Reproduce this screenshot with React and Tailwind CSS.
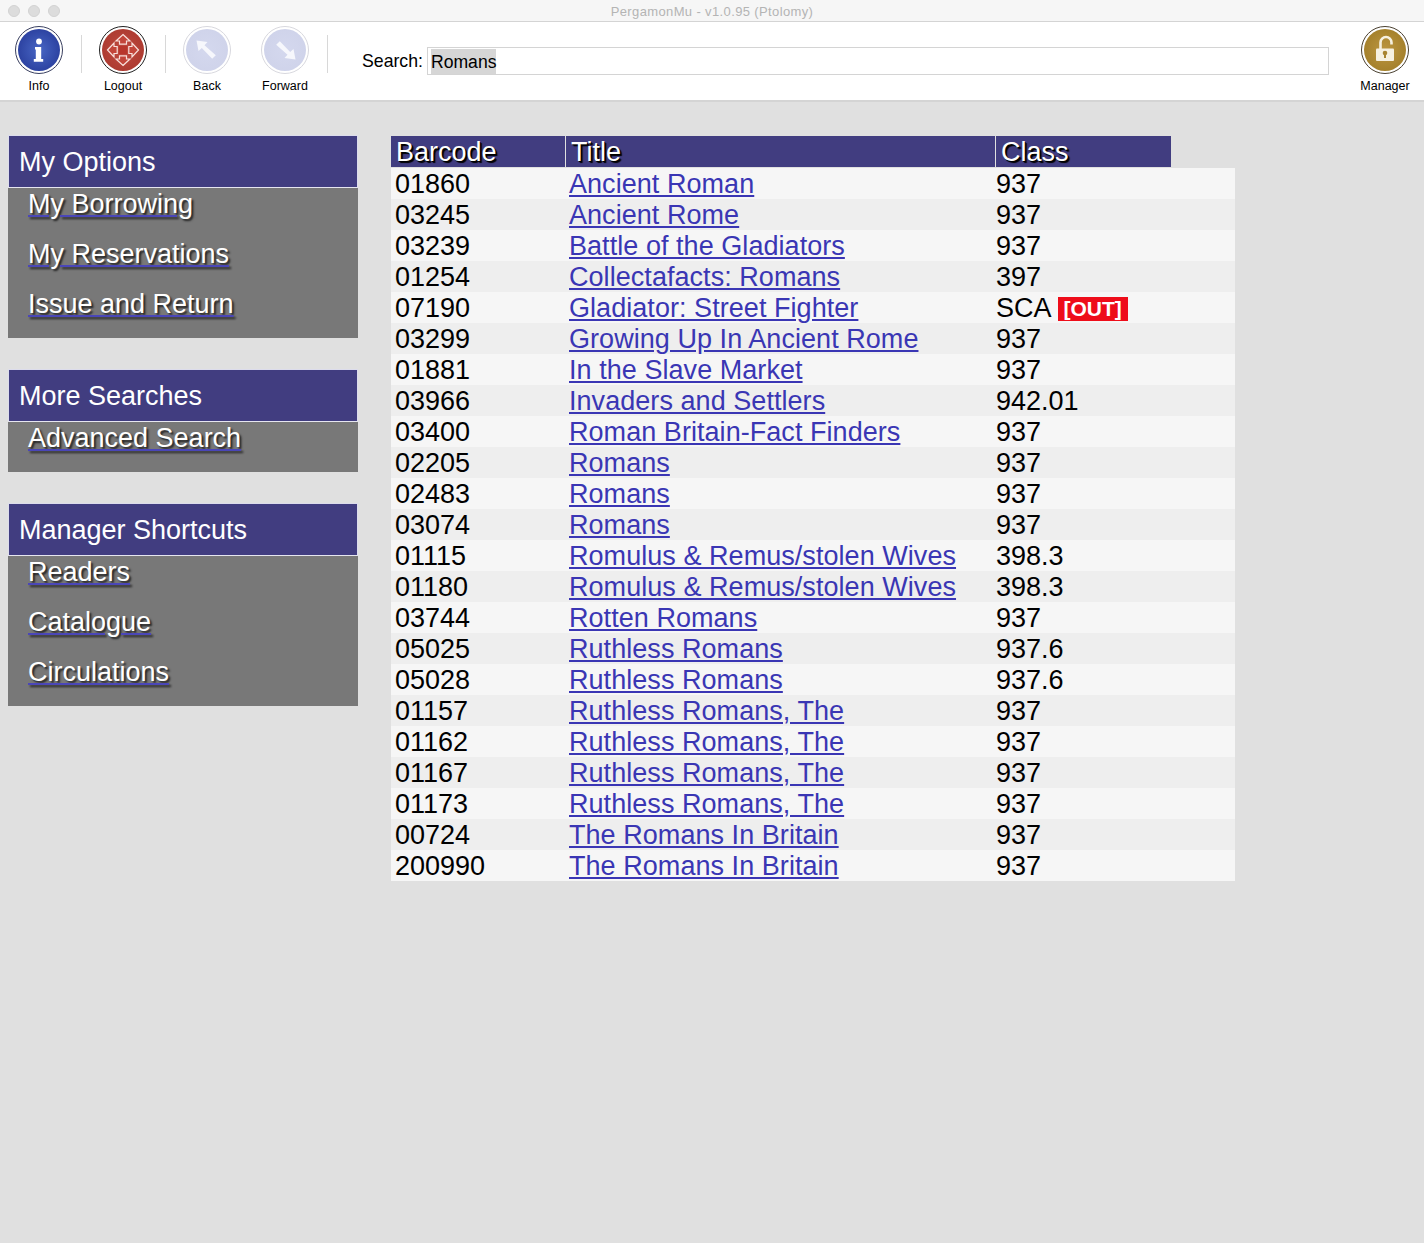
const rows = [
  ["01860", "Ancient Roman", "937"],
  ["03245", "Ancient Rome", "937"],
  ["03239", "Battle of the Gladiators", "937"],
  ["01254", "Collectafacts: Romans", "397"],
  ["07190", "Gladiator: Street Fighter", "SCA", true],
  ["03299", "Growing Up In Ancient Rome", "937"],
  ["01881", "In the Slave Market", "937"],
  ["03966", "Invaders and Settlers", "942.01"],
  ["03400", "Roman Britain-Fact Finders", "937"],
  ["02205", "Romans", "937"],
  ["02483", "Romans", "937"],
  ["03074", "Romans", "937"],
  ["01115", "Romulus & Remus/stolen Wives", "398.3"],
  ["01180", "Romulus & Remus/stolen Wives", "398.3"],
  ["03744", "Rotten Romans", "937"],
  ["05025", "Ruthless Romans", "937.6"],
  ["05028", "Ruthless Romans", "937.6"],
  ["01157", "Ruthless Romans, The", "937"],
  ["01162", "Ruthless Romans, The", "937"],
  ["01167", "Ruthless Romans, The", "937"],
  ["01173", "Ruthless Romans, The", "937"],
  ["00724", "The Romans In Britain", "937"],
  ["200990", "The Romans In Britain", "937"],
];

const menus = [
  { title: "My Options", items: ["My Borrowing", "My Reservations", "Issue and Return"] },
  { title: "More Searches", items: ["Advanced Search"] },
  { title: "Manager Shortcuts", items: ["Readers", "Catalogue", "Circulations"] },
];

function Disc({ ring = "#222", id, from, to, children }) {
  return (
    <svg width="48" height="48" viewBox="0 0 48 48">
      <defs>
        <radialGradient id={id} cx="50%" cy="50%" r="55%">
          <stop offset="0%" stopColor={from} />
          <stop offset="100%" stopColor={to} />
        </radialGradient>
      </defs>
      <circle cx="24" cy="24" r="23.5" fill="#fff" stroke={ring} strokeWidth="1" />
      <circle cx="24" cy="24" r="21" fill={`url(#${id})`} />
      {children}
    </svg>
  );
}

const InfoIcon = () => (
  <Disc id="i1" ring="#3a4060" from="#4866c4" to="#2a3f9e">
    <circle cx="24" cy="15.5" r="2.9" fill="#fff" />
    <path d="M20 21h6.2v12h2v2.8h-9.4v-2.8h2v-9.4h-0.8z" fill="#fff" />
  </Disc>
);
const LogoutIcon = () => (
  <Disc id="i2" ring="#222" from="#c04a40" to="#ac3a30">
    <rect x="20" y="20" width="8" height="8" fill="#b8362c" />
    <g fill="#c2453a" stroke="#f8e0dc" strokeWidth="1.2" strokeLinejoin="miter">
      <path d="M24 8.5l7 6.5h-3.5v3.2h-7v-3.2h-3.5z" />
      <path d="M24 39.5l7-6.5h-3.5v-3.2h-7v3.2h-3.5z" />
      <path d="M8.5 24l6.5-7v3.5h3.2v7h-3.2v3.5z" />
      <path d="M39.5 24l-6.5-7v3.5h-3.2v7h3.2v3.5z" />
    </g>
  </Disc>
);
const BackIcon = () => (
  <Disc id="i3" ring="#d8d8de" from="#d4d8ee" to="#cfd3ea">
    <path d="M13.5 14.5l11 1.5-3 3.2 11.3 10-3.6 3.6-10.4-10.8-3.3 3z" fill="#f6f7fc" />
  </Disc>
);
const ForwardIcon = () => (
  <Disc id="i4" ring="#d8d8de" from="#d4d8ee" to="#cfd3ea">
    <path d="M34.5 33.5l-11-1.5 3-3.2-11.3-10 3.6-3.6 10.4 10.8 3.3-3z" fill="#f6f7fc" />
  </Disc>
);
const ManagerIcon = () => (
  <Disc id="i5" ring="#4a4030" from="#bc9640" to="#a37f2a">
    <path d="M19.5 23v-6.5a5.5 5.5 0 0 1 11 0v2" fill="none" stroke="#f6f0e0" strokeWidth="2.6" />
    <rect x="15" y="22.5" width="18" height="12.5" rx="1" fill="#f6f0e0" />
    <circle cx="24" cy="27" r="2.3" fill="#a88430" />
    <rect x="23" y="27.5" width="2" height="4.5" fill="#a88430" />
  </Disc>
);

function Tool({ label, icon, className }) {
  return (
    <div className={`flex flex-col items-center w-[48px] ${className}`}>
      {icon}
      <span className="mt-[5px] text-[12.5px] leading-[15px] text-black whitespace-nowrap">{label}</span>
    </div>
  );
}

const Sep = ({ className }) => <div className={`w-px h-[38px] bg-[#d8d8d8] mt-[9px] ${className}`} />;

export default function App() {
  return (
    <div className="min-h-[1243px] bg-[#e0e0e0] font-['Liberation_Sans',Arial,sans-serif]">
      <div className="h-[22px] bg-[#f6f6f6] border-b border-[#d4d4d4] flex items-center relative">
        <div className="flex gap-[8px] pl-[8px]">
          <span className="w-[12px] h-[12px] rounded-full bg-[#dcdcdc] border border-[#d2d2d2]" />
          <span className="w-[12px] h-[12px] rounded-full bg-[#dcdcdc] border border-[#d2d2d2]" />
          <span className="w-[12px] h-[12px] rounded-full bg-[#dcdcdc] border border-[#d2d2d2]" />
        </div>
        <span className="absolute inset-x-0 top-[3px] text-center text-[13px] leading-[17px] text-[#b4b4b4] tracking-[0.37px]">
          PergamonMu - v1.0.95 (Ptolomy)
        </span>
      </div>

      <div className="h-[80px] bg-white border-b-2 border-[#d4d4d4] flex items-start pt-[4px] pl-[15px] pr-[15px]">
        <Tool label="Info" icon={<InfoIcon />} />
        <Sep className="ml-[18px]" />
        <Tool label="Logout" icon={<LogoutIcon />} className="ml-[17px]" />
        <Sep className="ml-[18px]" />
        <Tool label="Back" icon={<BackIcon />} className="ml-[17px]" />
        <Tool label="Forward" icon={<ForwardIcon />} className="ml-[30px]" />
        <Sep className="ml-[18px]" />
        <div className="flex items-center ml-[34px] mt-[20px] flex-1">
          <span className="text-[17.7px] leading-[30px] text-black">Search:</span>
          <div className="ml-[4px] flex-1 h-[28px] border border-[#d4d4d4] bg-white flex items-center pl-[3px]">
            <span className="text-[17.6px] leading-[24px] bg-[#d6d6d6] text-black pt-[1px]">Romans</span>
          </div>
        </div>
        <Tool label="Manager" icon={<ManagerIcon />} className="ml-[32px]" />
      </div>

      <div className="flex items-start pt-[33px] pl-[8px] text-[27px] leading-[31px]">
        <div className="w-[350px] flex flex-col gap-[31px]">
          {menus.map((m) => (
            <div key={m.title} className="bg-[#787878]">
              <div className="h-[53px] bg-[#413d80] border-t border-x border-[#dcdcec] border-b-[1px] border-b-[#e6e6f0] pl-[10px] pt-[11px] text-white">
                {m.title}
              </div>
              <div className="flex flex-col gap-[19px] pl-[20px] pb-[18px] pt-[1px]">
                {m.items.map((it) => (
                  <a
                    key={it}
                    className="text-white underline decoration-[#4a46b8] [text-shadow:2px_2px_2px_#222] w-fit"
                  >
                    {it}
                  </a>
                ))}
              </div>
            </div>
          ))}
        </div>

        <div className="ml-[33px] w-[844px] mt-[1px]">
          <div className="flex h-[32px] gap-px text-white [text-shadow:1px_1px_0_#000,2px_2px_1px_#000] pb-[1px]">
            <div className="w-[174px] bg-[#413d80] pl-[5px] pt-[1px]">Barcode</div>
            <div className="w-[429px] bg-[#413d80] pl-[5px] pt-[1px]">Title</div>
            <div className="w-[175px] bg-[#413d80] pl-[5px] pt-[1px]">Class</div>
          </div>
          {rows.map((r, i) => (
            <div key={i} className={`flex h-[31px] pt-[1px] ${i % 2 === 0 ? "bg-[#f6f6f6]" : "bg-[#eeeeee]"} text-black`}>
              <div className="w-[175px] pl-[4px]">{r[0]}</div>
              <div className="w-[430px] pl-[3px]">
                <a className="text-[#3a36b4] underline tracking-[0.05px]">{r[1]}</a>
              </div>
              <div className="flex-1 flex items-start">
                <span>{r[2]}</span>
                {r[3] && (
                  <span className="ml-[6px] mt-[4px] h-[24px] px-[6px] bg-[#ee0d1a] text-white font-bold text-[21px] leading-[24px]">
                    [OUT]
                  </span>
                )}
              </div>
            </div>
          ))}
        </div>
      </div>
    </div>
  );
}
